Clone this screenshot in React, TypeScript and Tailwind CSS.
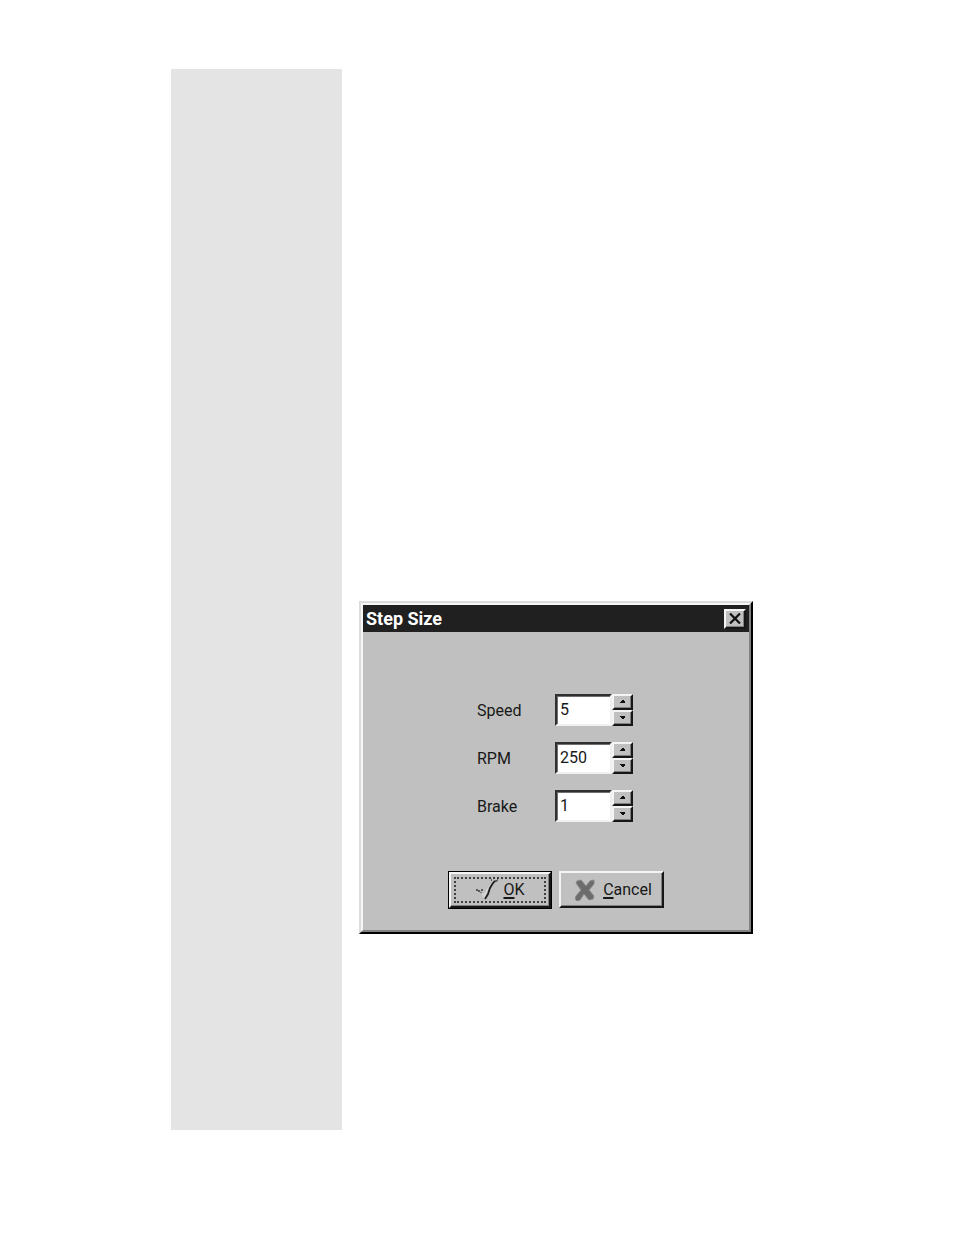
import { useState } from "react";

const raised =
  "border-2 border-t-[#f4f4f4] border-l-[#f4f4f4] border-b-[#161616] border-r-[#161616] bg-[#c0c0c0] shadow-[inset_-1px_-1px_0_#808080]";

type StepFieldProps = { id: string; label: string; initial: number };

function StepField({ id, label, initial }: StepFieldProps) {
  const [value, setValue] = useState(initial);
  return (
    <div className="flex h-8 items-center">
      <label htmlFor={id} className="w-[78px] pt-[2px]">
        {label}
      </label>
      <input
        id={id}
        type="text"
        inputMode="numeric"
        value={value}
        onChange={(e) => setValue(Number(e.target.value) || 0)}
        className="h-8 w-[57px] rounded-none border-2 border-t-[#303030] border-r-[#f0f0f0] border-b-[#f0f0f0] border-l-[#303030] bg-white pb-[2px] pl-[3px] shadow-[inset_1px_1px_0_#707070] outline-none"
      />
      <div className="flex h-8 w-[21px] flex-col">
        <button
          type="button"
          aria-label={`Increase ${label}`}
          onClick={() => setValue(value + 1)}
          className={`flex flex-1 items-center justify-center ${raised}`}
        >
          <svg width="6" height="4" viewBox="0 0 6 4" fill="#101010">
            <path d="M2 0h2v1h1v2H0V2h1V1h1z" />
          </svg>
        </button>
        <button
          type="button"
          aria-label={`Decrease ${label}`}
          onClick={() => setValue(value - 1)}
          className={`flex flex-1 items-center justify-center ${raised}`}
        >
          <svg width="6" height="4" viewBox="0 0 6 4" fill="#101010">
            <path d="M0 0h5v2H4v1H2V2H1V1H0z" />
          </svg>
        </button>
      </div>
    </div>
  );
}

export default function App() {
  return (
    <main className="flex min-h-screen gap-[17px] bg-white pt-[69px] pr-4 pb-[105px] pl-[171px]">
      <aside className="w-[171px] shrink-0 bg-[#e4e4e4]" />
      <section className="min-w-0 flex-1 pt-[532px]">
        <form
          role="dialog"
          aria-labelledby="dialog-title"
          onSubmit={(e) => e.preventDefault()}
          className="w-full max-w-[394px] border-2 border-t-[#dcdcdc] border-r-black border-b-black border-l-[#dcdcdc] bg-[#c0c0c0] font-[Roboto,sans-serif] text-base leading-5 text-[#181818]"
        >
          <div className="border-2 border-t-[#f6f6f6] border-r-[#808080] border-b-[#808080] border-l-[#f6f6f6] pb-[21px]">
            <header className="flex h-[27px] items-center justify-between bg-[#202020] pr-[3px] pl-[3px]">
              <h1 id="dialog-title" className="text-lg font-bold text-white">
                Step Size
              </h1>
              <button
                type="button"
                aria-label="Close"
                className={`flex h-5 w-[22px] items-center justify-center ${raised}`}
              >
                <svg width="12" height="11" viewBox="0 0 12 11" fill="none" stroke="#101010" strokeWidth="2.2">
                  <path d="M1 .5l10 10M11 .5l-10 10" />
                </svg>
              </button>
            </header>

            <div className="flex flex-col gap-4 pt-[62px] pl-[114px]">
              <StepField id="speed" label="Speed" initial={5} />
              <StepField id="rpm" label="RPM" initial={250} />
              <StepField id="brake" label="Brake" initial={1} />
            </div>

            <div className="flex gap-[7px] pt-[49px] pl-[85px]">
              <button type="submit" className="h-[38px] w-[104px] border border-black">
                <span className={`flex h-full p-[3px] ${raised}`}>
                  <span className="flex flex-1 items-center justify-center gap-1 border-2 border-dotted border-[#404040]">
                    <svg width="24" height="22" viewBox="0 0 24 22" fill="none">
                      <path d="M5 13l5 7 4-12 6-6-7 6-4 7-3-3z" fill="#d4d4d4" />
                      <path d="M10 20l3-5 2-6 3-5 2-2" stroke="#202020" strokeWidth="1.8" />
                      <path d="M1 11h2M3 12h2M6 11h2M20 2h2M16 1h1M22 1h1" stroke="#383838" strokeWidth="1.5" />
                      <path d="M5 13l2 1" stroke="#808080" strokeWidth="1.5" />
                    </svg>
                    <span>
                      <u className="decoration-2 underline-offset-2">O</u>K
                    </span>
                  </span>
                </span>
              </button>
              <button
                type="button"
                className={`flex h-[37px] w-[105px] items-center justify-center gap-2 pl-1 ${raised}`}
              >
                <svg width="20" height="22" viewBox="0 0 20 22">
                  <path
                    d="M1 4l1-2 4-1 5 6 4-5 4-1v4l-5 6 5 6-1 3-4 1-5-6-4 6-3 1-2-2 1-3 5-6z"
                    fill="#6c6c6c"
                    stroke="#888888"
                  />
                </svg>
                <span>
                  <u className="decoration-2 underline-offset-2">C</u>ancel
                </span>
              </button>
            </div>
          </div>
        </form>
      </section>
    </main>
  );
}
